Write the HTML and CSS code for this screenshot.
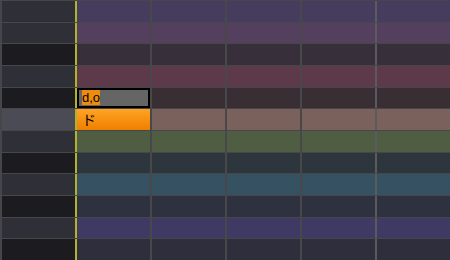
FILE: index.html
```html
<!DOCTYPE html>
<html lang="ja">
<head>
    <meta charset="UTF-8">
    <title>Piano Roll</title>
    <link rel="stylesheet" href="styles.css">
</head>
<body>
    <div class="roll">
        <div class="row light r0"><div class="key"></div><div class="cell"></div><div class="cell"></div><div class="cell"></div><div class="cell"></div><div class="cell bar"></div></div>
        <div class="row light r1"><div class="key"></div><div class="cell"></div><div class="cell"></div><div class="cell"></div><div class="cell"></div><div class="cell bar"></div></div>
        <div class="row dark r2"><div class="key"></div><div class="cell"></div><div class="cell"></div><div class="cell"></div><div class="cell"></div><div class="cell bar"></div></div>
        <div class="row light r3"><div class="key"></div><div class="cell"></div><div class="cell"></div><div class="cell"></div><div class="cell"></div><div class="cell bar"></div></div>
        <div class="row dark r4">
            <div class="key"></div>
            <div class="cell editing"><span class="input"><span class="sel">d,o</span></span></div>
            <div class="cell"></div><div class="cell"></div><div class="cell"></div><div class="cell bar"></div>
        </div>
        <div class="row current r5">
            <div class="key"></div>
            <div class="cell note">ド</div>
            <div class="cell"></div><div class="cell"></div><div class="cell"></div><div class="cell bar"></div>
        </div>
        <div class="row light r6"><div class="key"></div><div class="cell"></div><div class="cell"></div><div class="cell"></div><div class="cell"></div><div class="cell bar"></div></div>
        <div class="row dark r7"><div class="key"></div><div class="cell"></div><div class="cell"></div><div class="cell"></div><div class="cell"></div><div class="cell bar"></div></div>
        <div class="row light r8"><div class="key"></div><div class="cell"></div><div class="cell"></div><div class="cell"></div><div class="cell"></div><div class="cell bar"></div></div>
        <div class="row dark r9"><div class="key"></div><div class="cell"></div><div class="cell"></div><div class="cell"></div><div class="cell"></div><div class="cell bar"></div></div>
        <div class="row light r10"><div class="key"></div><div class="cell"></div><div class="cell"></div><div class="cell"></div><div class="cell"></div><div class="cell bar"></div></div>
        <div class="row dark r11"><div class="key"></div><div class="cell"></div><div class="cell"></div><div class="cell"></div><div class="cell"></div><div class="cell bar"></div></div>
    </div>
</body>
</html>
```

FILE: styles.css
```css
* { margin: 0; padding: 0; box-sizing: border-box; }
body {
    background: #1c1b20;
    font-family: "Liberation Sans", "Noto Sans CJK JP", sans-serif;
    overflow: hidden;
}
.roll {
    width: 450px;
    height: 260px;
    display: grid;
    grid-template-rows: repeat(12, 1fr);
}
.row {
    display: flex;
    border-top: 1px solid #47474a;
}
.key {
    width: 77px;
    flex: none;
    border-left: 2px solid #45454a;
    border-right: 2px solid #b3b22c;
}
.light .key { background: #2f3037; }
.dark .key { background: #1c1b20; }
.current .key { background: #4a4b55; }

.cell {
    width: 75px;
    flex: none;
    border-left: 2px solid #48484b;
    position: relative;
}
.key + .cell { width: 73px; border-left: none; }
.cell.bar { flex: 1; border-left-color: #5b5b5e; }

.r0 .cell { background: #463c5e; }
.r1 .cell { background: #543f5e; }
.r2 .cell { background: #37303b; }
.r3 .cell { background: #5c3a4a; }
.r4 .cell { background: #3a2e35; }
.r5 .cell { background: #7a615b; }
.r6 .cell { background: #4f5d42; }
.r7 .cell { background: #2e363d; }
.r8 .cell { background: #365262; }
.r9 .cell { background: #2e3140; }
.r10 .cell { background: #3f3a63; }
.r11 .cell { background: #2f2e3d; }

.r4 .cell.editing {
    background: #656565;
    border: 2px solid #000;
    display: flex;
    align-items: center;
    padding-left: 3px;
}
.input {
    font-size: 13px;
    color: #000;
    line-height: 14px;
}
.sel { background: #f08c0c; }

.r5 .cell.note {
    background: linear-gradient(#ffa324, #f07f00);
    color: #000;
    font-family: "Noto Sans CJK JP", sans-serif;
    font-size: 14px;
    line-height: 20px;
    padding-left: 5px;
}
```
